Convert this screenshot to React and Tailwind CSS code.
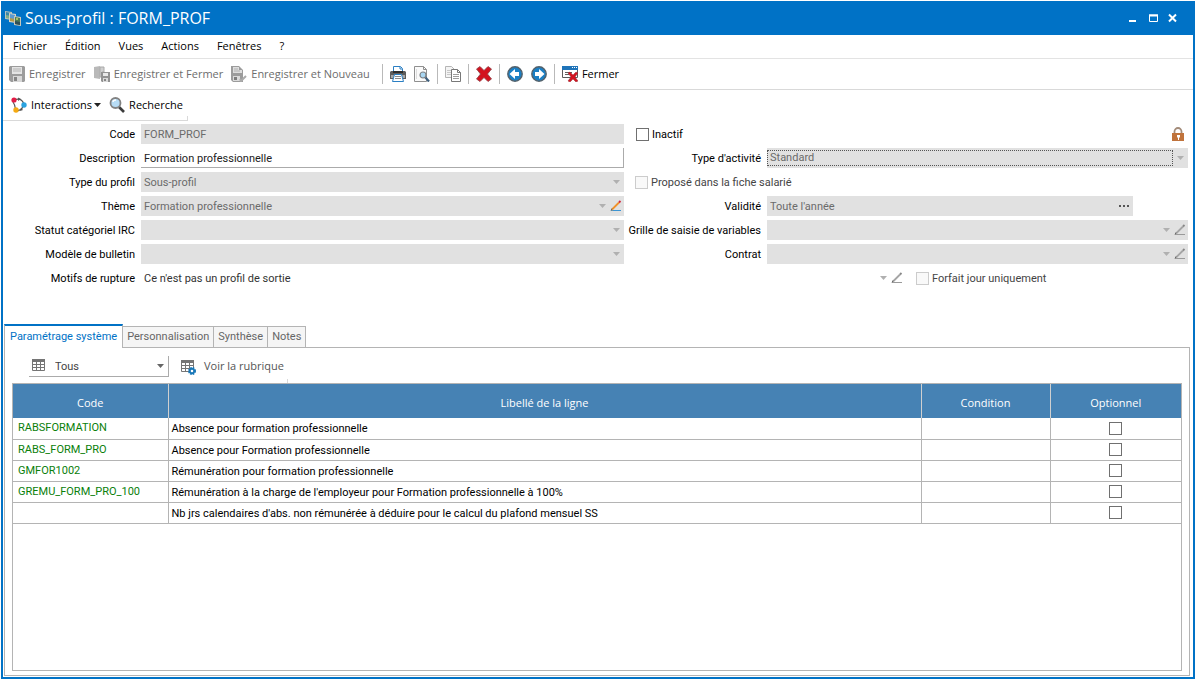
import { useState } from 'react'
import clsx from 'clsx'

const uiFont = `font-['Open_Sans','Noto_Sans',sans-serif]`
const formFont = `font-['Roboto','Liberation_Sans',sans-serif]`

const menus = ['Fichier', 'Édition', 'Vues', 'Actions', 'Fenêtres', '?']
const tabs = ['Paramétrage système', 'Personnalisation', 'Synthèse', 'Notes']

const lines = [
  { code: 'RABSFORMATION', label: 'Absence pour formation professionnelle' },
  { code: 'RABS_FORM_PRO', label: 'Absence pour Formation professionnelle' },
  { code: 'GMFOR1002', label: 'Rémunération pour formation professionnelle' },
  { code: 'GREMU_FORM_PRO_100', label: "Rémunération à la charge de l'employeur pour Formation professionnelle à 100%" },
  { code: '', label: "Nb jrs calendaires d'abs. non rémunérée à déduire pour le calcul du plafond mensuel SS" },
]

/* ---------- icons ---------- */

const Icon = ({ children, size = 16 }) => (
  <svg width={size} height={size} viewBox={`0 0 ${size} ${size}`} fill="none" className="shrink-0" aria-hidden="true">{children}</svg>
)

const AppIcon = () => (
  <Icon>
    <path d="M0 1l7 1v8l-7-1z" fill="#b9c3bd" />
    <path d="M1 2l5 1v5l-5-1z" fill="#3a86a8" />
    <path d="M1 5l5 1v3l-5-1z" fill="#7fae8a" />
    <path d="M4 3l7 1v9l-7-1z" fill="#d5d3c4" />
    <path d="M5 4l5 1v6l-5-1z" fill="#5a9ad0" />
    <path d="M5 8l5 1v3l-5-1z" fill="#b39a4a" />
    <path d="M9 6l7 1v9l-7-1z" fill="#c9c8ba" />
    <path d="M10 7l5 1v7l-5-1z" fill="#4b7a56" />
    <path d="M10 11l5 1v3l-5-1z" fill="#2f4f58" />
    <path d="M11 8h2v2h-2z" fill="#a8bf62" />
  </Icon>
)

const SaveIcon = () => (
  <Icon>
    <path d="M1 0h14l1 1v14l-1 1H2l-2-2V1z" fill="#9c9c9c" />
    <path d="M3 1h10v7H3z" fill="#e4e4e4" />
    <path d="M4 3h8M4 5h8" stroke="#b4b4b4" />
    <path d="M4 10h9v6H4z" fill="#d8d8d8" />
    <path d="M5 11h3v4H5z" fill="#858585" />
  </Icon>
)

const SaveCloseIcon = () => (
  <Icon>
    <path d="M0 1l6-1v13l-6-1z" fill="#b9b9b9" />
    <path d="M6 1h4v5H8v5H6z" fill="#cfcfcf" stroke="#aaa" />
    <path d="M7 6h9v10H8l-1-1z" fill="#929292" />
    <path d="M9 7h5v3H9z" fill="#e8e8e8" />
    <path d="M9 12h5v4H9z" fill="#dadada" />
    <path d="M10 13h2v2h-2z" fill="#858585" />
  </Icon>
)

const SaveNewIcon = () => (
  <Icon>
    <path d="M0 0h8l4 4v12H2l-2-2z" fill="#9c9c9c" />
    <path d="M2 1h6v3h3v3H2z" fill="#dedede" />
    <path d="M3 3h4M3 5h6" stroke="#b0b0b0" />
    <path d="M2 10h7v5H2z" fill="#dadada" />
    <path d="M3 11h3v3H3z" fill="#7e7e7e" />
    <path d="M9 13l1 2 5-5" stroke="#ababab" strokeWidth="2" />
  </Icon>
)

const PrintIcon = () => (
  <Icon>
    <path d="M3.500 5V.5h7l2 2V5" fill="#fff" stroke="#2b7fc3" />
    <path d="M10 1v2h2" stroke="#2b7fc3" />
    <path d="M0 6l1-1h14l1 1v7H0z" fill="#5c5c5c" />
    <path d="M1 9h14v3H1z" fill="#a6a6a6" />
    <path d="M3 5h10v2H3z" fill="#2d2d2d" />
    <path d="M4.500 8.500h7l2 7h-11z" fill="#fff" stroke="#2b7fc3" />
    <path d="M5 10.500h6M5 12.500h6" stroke="#8b8b8b" />
  </Icon>
)

const PreviewIcon = () => (
  <Icon>
    <path d="M.5.500h9l3 3v12H.5z" fill="#fafafa" stroke="#8f8f8f" />
    <path d="M9.500.500v3h3" stroke="#8f8f8f" />
    <path d="M2 13V3h1v10z" fill="#ddd" />
    <circle cx="9" cy="9" r="3" fill="#a9d6f2" stroke="#7d8286" strokeWidth="1.200" />
    <path d="M11.500 11.500l3.500 4" stroke="#3f5f7d" strokeWidth="2.200" />
  </Icon>
)

const CopyIcon = () => (
  <Icon>
    <path d="M.5.500h6l3 3v8h-9z" fill="#f4f4f4" stroke="#b5b5b5" />
    <path d="M2 4.500h4M2 6.500h4M2 8.500h4" stroke="#c8c8c8" />
    <path d="M6.500 3.500h6l3 3v9h-9z" fill="#fff" stroke="#787878" />
    <path d="M12.500 3.500v3h3" stroke="#787878" />
    <path d="M8 8.500h6M8 10.500h6M8 12.500h6" stroke="#9d9d9d" />
  </Icon>
)

const DeleteIcon = () => (
  <Icon>
    <path d="M.5 3L4 .5l4 4 4-4L15.500 3l-4 5 4 5-3.500 2.500-4-4-4 4L.5 13l4-5z" fill="#d3131f" stroke="#8e4046" strokeWidth=".8" />
  </Icon>
)

const ArrowIcon = ({ flip }) => (
  <Icon>
    <g transform={flip ? 'rotate(180 8 8)' : undefined}>
      <circle cx="8" cy="8" r="7.200" fill="#1b7fc4" stroke="#53616b" strokeWidth="1.400" />
      <path d="M2.500 8L8 3v3h4v4H8v3z" fill="#fff" />
    </g>
  </Icon>
)

const CloseWindowIcon = () => (
  <Icon>
    <path d="M.5.500h15v11H.5z" fill="#fff" stroke="#5c5c5c" />
    <path d="M0 0h16v4H0z" fill="#1f74b9" />
    <path d="M10 1.500h1M12 1.500h1M14 1.500h1" stroke="#fff" />
    <path d="M3 6.500h7M3 8.500h4" stroke="#606060" />
    <path d="M6 7l2-1 3 3 3-3 2 1-3 4 3 4-2 1-3-3-3 3-2-1 3-4z" fill="#d3131f" stroke="#963338" strokeWidth=".5" />
  </Icon>
)

const InteractionsIcon = () => (
  <Icon>
    <path d="M3 3c5-2 8-1 10 4M12 9c-1 4-4 5-8 5M2 5c2 3 3 5 2 8" stroke="#555" strokeWidth="1.200" />
    <path d="M7 .5l3 1.500-3 2zM10 11l-1 3 3-1z" fill="#555" />
    <circle cx="3" cy="3" r="2.600" fill="#e21b45" />
    <circle cx="13" cy="8" r="2.700" fill="#2aa3e0" />
    <circle cx="5" cy="13" r="2.700" fill="#f4a912" />
  </Icon>
)

const SearchIcon = () => (
  <Icon>
    <path d="M10 10l5 5" stroke="#3c3c3c" strokeWidth="2.600" />
    <circle cx="6.500" cy="6" r="5" fill="#b7dcf5" stroke="#828282" strokeWidth="1.800" />
    <path d="M4 5c0-1 1-2 3-2" stroke="#fff" strokeWidth="1.300" />
  </Icon>
)

const LockIcon = () => (
  <Icon size={14}>
    <path d="M3.500 7V4.500a3.500 3.500 0 017 0V7" stroke="#a38b79" strokeWidth="1.800" />
    <path d="M1 6h12v8H1z" fill="#c0733c" />
    <path d="M6 8h3v2l-1 1v2H7v-2L6 10z" fill="#fff" />
  </Icon>
)

const TableIcon = ({ gear }) => (
  <Icon>
    <path d="M1 1h13v12H1z" fill="#fff" />
    <path d="M1 1h13v3H1z" fill="#757575" />
    <path d="M1.500 4v8.500h12V4M5.500 4v8M9.500 4v8M1 6.500h12M1 9.500h12" stroke="#757575" />
    {gear && (
      <g>
        <circle cx="12" cy="12" r="3" stroke="#1877b8" strokeWidth="2" strokeDasharray="1.600 .8" />
        <circle cx="12" cy="12" r="2.200" fill="#fff" stroke="#1877b8" strokeWidth="1.800" />
      </g>
    )}
  </Icon>
)

const PencilIcon = ({ active }) => (
  <Icon size={12}>
    <path d="M1 10.500h10" stroke={active ? '#3a94d4' : '#9a9a9a'} />
    <path d="M1.500 10L9 2.500" stroke={active ? '#f0922b' : '#a5a5a5'} strokeWidth="1.800" />
    <path d="M9 2.500L10.500 1" stroke={active ? '#d3273e' : '#878787'} strokeWidth="1.800" />
    <path d="M1 10.500l1-2" stroke="#6b6b6b" />
  </Icon>
)

const Caret = ({ color = '#b0b0b0' }) => (
  <svg width="7" height="4" viewBox="0 0 7 4" className="pointer-events-none shrink-0" aria-hidden="true">
    <path d="M0 0h7L3.500 4z" fill={color} />
  </svg>
)

/* ---------- form pieces ---------- */

const Row = ({ id, label, labelCls, children }) => (
  <div className="flex h-5 items-center">
    <label htmlFor={id} className={clsx('mr-1.5 shrink-0 whitespace-nowrap pt-0.5 text-right', labelCls)}>{label}</label>
    {children}
  </div>
)

const Select = ({ id, value = '', pencil, focused, plain }) => (
  <div className={clsx('flex h-5 min-w-0 flex-1 items-center', plain || !pencil ? 'pr-1' : 'pr-0.5', !plain && 'bg-[#e1e1e1]')}>
    <select id={id} disabled defaultValue={value}
      className={clsx('min-w-0 flex-1 appearance-none opacity-100', plain ? 'text-[#333]' : 'text-[#6b6b6b]', focused ? 'mr-1 h-4 border border-dotted border-[#555] pl-0.5 leading-[14px]' : 'h-5 pl-[3px] pt-0.5')}>
      <option value={value}>{value}</option>
    </select>
    <Caret />
    {pencil && (
      <button type="button" aria-label="Modifier" className="ml-1" disabled={pencil !== 'active'}>
        <PencilIcon active={pencil === 'active'} />
      </button>
    )}
  </div>
)

const Check = ({ id, label, disabled }) => (
  <div className="flex items-center">
    <input id={id} type="checkbox" disabled={disabled}
      className={clsx('h-[13px] w-[13px] appearance-none border', disabled ? 'border-[#ccc] bg-[#f9f9f9]' : 'border-[#707070] bg-white')} />
    {label && <label htmlFor={id} className={clsx('ml-[3px] whitespace-nowrap pt-0.5', disabled && 'text-[#444]')}>{label}</label>}
  </div>
)

const Tool = ({ icon, children, disabled, label }) => (
  <button type="button" disabled={disabled} aria-label={label}
    className={clsx('flex items-center gap-1 whitespace-nowrap', disabled ? 'text-[#6d6d6d]' : 'text-black')}>
    {icon}{children}
  </button>
)

const Sep = () => <div className="h-5 w-px bg-[#b9b9b9]" />

export default function App() {
  const [tab, setTab] = useState(0)

  return (
    <div className={clsx('flex min-h-screen flex-col bg-white p-px text-black', uiFont)}>
      <div className="flex flex-1 flex-col border-2 border-t-0 border-[#0072c6]">

        {/* Title bar */}
        <header className="flex h-[34px] items-center gap-1 bg-[#0072c6] pl-0.5 text-white">
          <AppIcon />
          <h1 className="flex-1 text-base leading-5">Sous-profil : FORM_PROF</h1>
          <div className="flex items-center gap-2 pr-3.5">
            <button type="button" aria-label="Réduire">
              <Icon size={12}><path d="M2 9h7" stroke="#fff" strokeWidth="2" /></Icon>
            </button>
            <button type="button" aria-label="Agrandir">
              <Icon size={12}><path d="M2 3h9M2.500 3v6.500h8V3" stroke="#fff" strokeWidth="1" /><path d="M2 3.500h9" stroke="#fff" strokeWidth="2" /></Icon>
            </button>
            <button type="button" aria-label="Fermer la fenêtre">
              <Icon size={12}><path d="M2 2.500l7 7M9 2.500l-7 7" stroke="#fff" strokeWidth="2" /></Icon>
            </button>
          </div>
        </header>

        {/* Menus */}
        <nav className="flex h-6 items-center gap-[18px] border-b border-[#e3e3e3] pl-2.5 text-[11px]">
          {menus.map(m => <button key={m} type="button">{m}</button>)}
        </nav>

        <div className="flex h-[31px] items-center gap-2 border-b border-[#d9d9d9] pl-1.5 text-[11px]">
          <Tool icon={<SaveIcon />} disabled>Enregistrer</Tool>
          <Tool icon={<SaveCloseIcon />} disabled>Enregistrer et Fermer</Tool>
          <Tool icon={<SaveNewIcon />} disabled>Enregistrer et Nouveau</Tool>
          <div className="ml-1 flex items-center gap-[7px]">
            <Sep />
            <div className="flex gap-2">
              <Tool icon={<PrintIcon />} label="Imprimer" />
              <Tool icon={<PreviewIcon />} label="Aperçu" />
            </div>
            <Sep />
            <Tool icon={<CopyIcon />} label="Dupliquer" />
            <Sep />
            <Tool icon={<DeleteIcon />} label="Supprimer" />
            <Sep />
            <div className="flex gap-2">
              <Tool icon={<ArrowIcon />} label="Précédent" />
              <Tool icon={<ArrowIcon flip />} label="Suivant" />
            </div>
            <Sep />
            <Tool icon={<CloseWindowIcon />}>Fermer</Tool>
          </div>
        </div>

        <div className="flex h-[31px] items-center gap-2 self-start border-b border-[#d9d9d9] pl-2 text-[11px]">
          <Tool icon={<InteractionsIcon />}>Interactions<span className="-ml-0.5"><Caret color="#222" /></span></Tool>
          <Tool icon={<SearchIcon />}>Recherche</Tool>
          <span className="-ml-1 h-1 w-px self-end bg-[#d9d9d9]" />
        </div>

        {/* Profile fields */}
        <form className={clsx('flex flex-col gap-1 pr-[5px] pt-[3px] text-[11px] leading-4', formFont)}>
          <div className="grid grid-cols-[621fr_564fr]">
            <div className="flex flex-col gap-1">
              <Row id="code" label="Code" labelCls="w-[132px]">
                <input id="code" disabled defaultValue="FORM_PROF" className="h-5 min-w-0 flex-1 bg-[#e1e1e1] pl-[3px] text-[#6b6b6b]" />
              </Row>
              <Row id="desc" label="Description" labelCls="w-[132px]">
                <input id="desc" defaultValue="Formation professionnelle" className="h-5 min-w-0 flex-1 border-b border-r border-[#ababab] pl-[3px] pt-0.5 text-[#222] outline-none" />
              </Row>
              <Row id="type" label="Type du profil" labelCls="w-[132px]"><Select id="type" value="Sous-profil" /></Row>
              <Row id="theme" label="Thème" labelCls="w-[132px]"><Select id="theme" value="Formation professionnelle" pencil="active" /></Row>
              <Row id="irc" label="Statut catégoriel IRC" labelCls="w-[132px]"><Select id="irc" /></Row>
              <Row id="model" label="Modèle de bulletin" labelCls="w-[132px]"><Select id="model" /></Row>
            </div>

            <div className="flex flex-col gap-1">
              <div className="flex h-5 items-center justify-between pl-3 pr-[3px]">
                <Check id="inactif" label="Inactif" />
                <LockIcon />
              </div>
              <Row id="activite" label="Type d'activité" labelCls="w-[137px]"><Select id="activite" value="Standard" focused /></Row>
              <div className="flex h-5 items-center pl-[11px]">
                <Check id="propose" label="Proposé dans la fiche salarié" disabled />
              </div>
              <Row id="validite" label="Validité" labelCls="w-[137px]">
                <div className="mr-[55px] flex h-5 min-w-0 flex-1 items-center bg-[#e1e1e1] pr-1">
                  <input id="validite" disabled defaultValue="Toute l'année" className="h-5 min-w-0 flex-1 pl-[3px] text-[#6b6b6b]" />
                  <button type="button" aria-label="Choisir" className="flex gap-0.5">
                    <span className="h-0.5 w-0.5 bg-[#555]" /><span className="h-0.5 w-0.5 bg-[#555]" /><span className="h-0.5 w-0.5 bg-[#555]" />
                  </button>
                </div>
              </Row>
              <Row id="grille" label="Grille de saisie de variables" labelCls="w-[137px]"><Select id="grille" pencil="off" /></Row>
              <Row id="contrat" label="Contrat" labelCls="w-[137px]"><Select id="contrat" pencil="off" /></Row>
            </div>
          </div>

          <div className="grid grid-cols-[904fr_281fr]">
            <Row id="motifs" label="Motifs de rupture" labelCls="w-[132px]">
              <Select id="motifs" value="Ce n'est pas un profil de sortie" pencil="off" plain />
            </Row>
            <div className="flex items-center pl-[9px]">
              <Check id="forfait" label="Forfait jour uniquement" disabled />
            </div>
          </div>
        </form>

        {/* Tabs */}
        <div role="tablist" className={clsx('ml-px mr-[3px] mt-9 flex h-6 items-end text-[11px]', formFont)}>
          {tabs.map((t, i) => (
            <button key={t} type="button" role="tab" aria-selected={tab === i} onClick={() => setTab(i)}
              className={clsx('whitespace-nowrap border-r border-[#b4b4b4]', tab === i
                ? 'h-6 border-l border-t-2 border-t-[#0072c6] px-[5px] text-[#0072c6]'
                : 'h-[22px] border-b border-t bg-[#f5f5f5] px-1 text-[#666]')}>
              {t}
            </button>
          ))}
          <div className="flex-1 self-stretch border-b border-[#b4b4b4]" />
        </div>

        <section role="tabpanel" className={clsx('mb-px ml-px mr-[3px] flex flex-1 flex-col border border-t-0 border-[#b4b4b4] px-[7px] pb-1', formFont)}>
          <div className={clsx('flex h-[35px] items-center gap-[11px] pl-[17px] pt-0.5 text-[11px] text-[#444]', uiFont)}>
            <div className="flex h-[21px] w-[140px] items-center gap-2 border-b border-r border-[#ababab] pl-0.5 pr-1">
              <TableIcon />
              <select aria-label="Filtre" className={clsx('min-w-0 flex-1 appearance-none pt-0.5 outline-none', formFont)}>
                <option>Tous</option>
              </select>
              <Caret color="#666" />
            </div>
            <button type="button" className="flex items-center gap-2 text-[#555]">
              <TableIcon gear />Voir la rubrique
            </button>
            <span className="-ml-2 h-1 w-px self-end bg-[#d9d9d9]" />
          </div>

          <div className="flex-1 border border-[#b4b4b4]">
            <table className="w-full table-fixed border-collapse text-[11px]">
              <colgroup>
                <col className="w-[155px]" /><col /><col className="w-[129px]" /><col className="w-[131px]" />
              </colgroup>
              <thead>
                <tr className="h-[34px] bg-[#4682b4] text-white">
                  {['Code', 'Libellé de la ligne', 'Condition', 'Optionnel'].map(h => (
                    <th key={h} className="border-r border-[#d0d0d0] p-0 pt-1 text-center font-['Open_Sans',sans-serif] font-normal leading-4 last:border-r-0">{h}</th>
                  ))}
                </tr>
              </thead>
              <tbody>
                {lines.map(l => (
                  <tr key={l.label} className="h-[21px] border-b border-[#b4b4b4]">
                    <td className="border-r border-[#b4b4b4] p-0 pl-[5px] leading-4 text-[#0a800a]">{l.code}</td>
                    <td className="whitespace-nowrap border-r border-[#b4b4b4] p-0 pl-[3px] pt-0.5 leading-4">{l.label}</td>
                    <td className="border-r border-[#b4b4b4] p-0" />
                    <td className="p-0">
                      <input type="checkbox" aria-label="Optionnel" className="mx-auto block h-[13px] w-[13px] appearance-none border border-[#707070]" />
                    </td>
                  </tr>
                ))}
              </tbody>
            </table>
          </div>
        </section>
      </div>
    </div>
  )
}
